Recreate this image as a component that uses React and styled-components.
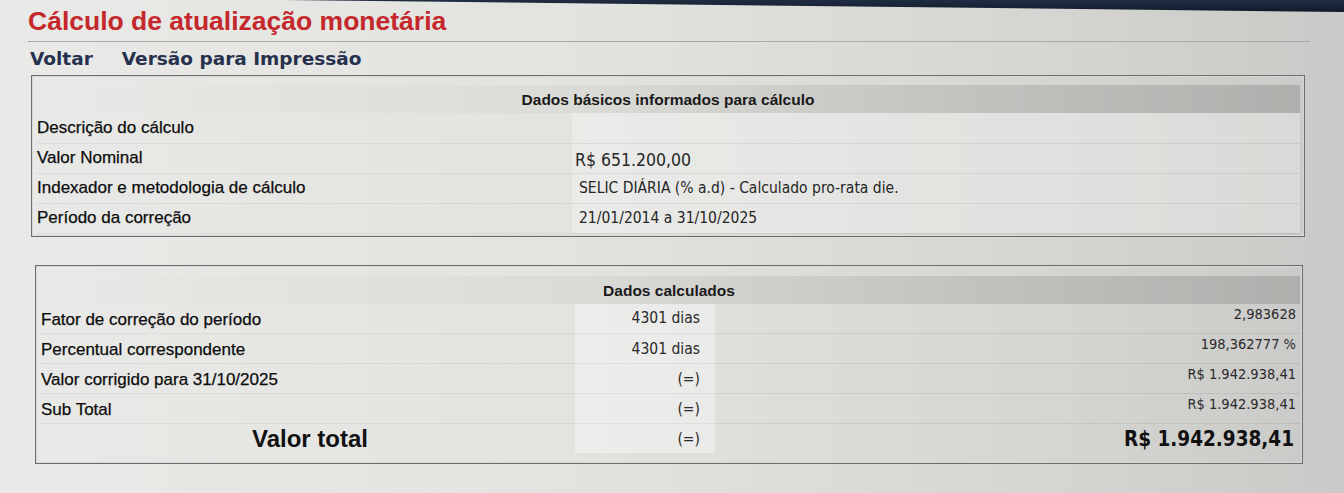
import React from 'react'
import styled, { createGlobalStyle } from 'styled-components'

const GlobalStyle = createGlobalStyle`
  html, body {
    margin: 0;
    padding: 0;
  }
  body {
    background: linear-gradient(90deg, #e9e9e7 0%, #e2e2df 45%, #d4d4d1 80%, #c9c9c7 100%);
    font-family: "Liberation Sans", Arial, sans-serif;
    color: #1c1c1c;
    height: 493px;
    overflow: hidden;
  }
`

const basicRows = [
  { label: 'Descrição do cálculo', value: '' },
  { label: 'Valor Nominal', value: 'R$ 651.200,00', big: true },
  { label: 'Indexador e metodologia de cálculo', value: 'SELIC DIÁRIA (% a.d) - Calculado pro-rata die.' },
  { label: 'Período da correção', value: '21/01/2014 a 31/10/2025' },
]

const calcRows = [
  { label: 'Fator de correção do período', mid: '4301 dias', value: '2,983628' },
  { label: 'Percentual correspondente', mid: '4301 dias', value: '198,362777 %' },
  { label: 'Valor corrigido para 31/10/2025', mid: '(=)', value: 'R$ 1.942.938,41' },
  { label: 'Sub Total', mid: '(=)', value: 'R$ 1.942.938,41' },
]

const App = () => {
  return (
    <>
      <GlobalStyle />
      <TopEdge />
      <Page>
        <Title>Cálculo de atualização monetária</Title>
        <Nav>
          <NavLink>Voltar</NavLink>
          <NavLink>Versão para Impressão</NavLink>
        </Nav>

        <BasicBox>
          <Table>
            <colgroup>
              <col style={{ width: 536 }} />
              <col />
            </colgroup>
            <thead>
              <HeadRow>
                <HeadCell colSpan={2}>Dados básicos informados para cálculo</HeadCell>
              </HeadRow>
            </thead>
            <tbody>
              {basicRows.map((r) => (
                <Row key={r.label}>
                  <LabelCell>{r.label}</LabelCell>
                  <ValueCell $big={r.big}>{r.value}</ValueCell>
                </Row>
              ))}
            </tbody>
          </Table>
        </BasicBox>

        <CalcBox>
          <Table>
            <colgroup>
              <col style={{ width: 537 }} />
              <col style={{ width: 140 }} />
              <col />
            </colgroup>
            <thead>
              <HeadRow>
                <HeadCell colSpan={3}>Dados calculados</HeadCell>
              </HeadRow>
            </thead>
            <tbody>
              {calcRows.map((r) => (
                <Row key={r.label}>
                  <CalcLabel>{r.label}</CalcLabel>
                  <MidCell>{r.mid}</MidCell>
                  <AmountCell>{r.value}</AmountCell>
                </Row>
              ))}
              <Row>
                <TotalLabel>Valor total</TotalLabel>
                <MidCell>(=)</MidCell>
                <TotalAmount>R$ 1.942.938,41</TotalAmount>
              </Row>
            </tbody>
          </Table>
        </CalcBox>
      </Page>
    </>
  )
}

const TopEdge = styled.div`
  position: absolute;
  top: 0;
  right: 0;
  width: 1060px;
  height: 12px;
  background: linear-gradient(180deg, #1f2c42 0%, #111a29 100%);
  clip-path: polygon(0 0, 100% 0, 100% 100%, 0 0);
`

const Page = styled.div`
  padding: 4px 34px 0 28px;
`

const Title = styled.h1`
  margin: 0;
  padding: 2px 0 5px 0;
  font-family: "Liberation Sans", Arial, sans-serif;
  font-size: 26.5px;
  line-height: 30px;
  font-weight: bold;
  color: #c4282b;
  border-bottom: 1px solid #a9a9a7;
`

const Nav = styled.div`
  display: flex;
  gap: 29px;
  padding: 6px 0 0 2px;
  height: 26px;
`

const NavLink = styled.a`
  font-family: "DejaVu Sans", Verdana, sans-serif;
  font-size: 18.5px;
  line-height: 22px;
  font-weight: bold;
  color: #26314d;
  cursor: pointer;
`

const Box = styled.div`
  border: 1px solid #6d6d6b;
  box-shadow: inset 0 0 0 1px #d8d8d6;
`

const BasicBox = styled(Box)`
  margin: 1px 5px 0 3px;
  padding: 9px 4px 2px 4px;
`

const CalcBox = styled(Box)`
  margin: 28px 7px 0 7px;
  padding: 10px 2px 9px 2px;
`

const Table = styled.table`
  width: 100%;
  border-collapse: collapse;
  table-layout: fixed;
`

const HeadRow = styled.tr`
  height: 28px;
`

const Row = styled.tr`
  height: 30px;
`

const HeadCell = styled.th`
  padding: 2px 0 0 0;
  font-family: "Liberation Sans", Arial, sans-serif;
  font-size: 15.5px;
  font-weight: bold;
  color: #1a1a1a;
  text-align: center;
  background: linear-gradient(90deg, rgba(0,0,0,0) 0%, rgba(0,0,0,0.03) 40%, rgba(0,0,0,0.1) 75%, rgba(0,0,0,0.14) 100%);
`

const LabelCell = styled.td`
  padding: 0 0 0 1px;
  font-family: "Liberation Sans", Arial, sans-serif;
  font-size: 17px;
  color: #0d0d0d;
  -webkit-text-stroke: 0.25px #0d0d0d;
  border-bottom: 1px solid rgba(0,0,0,0.05);
  white-space: nowrap;
`

const ValueCell = styled.td`
  padding: ${(p) => (p.$big ? '4px 0 0 3px' : '0 0 0 7px')};
  font-family: "DejaVu Sans Condensed", "DejaVu Sans", Tahoma, sans-serif;
  font-size: ${(p) => (p.$big ? '17.5px' : '15.5px')};
  color: #262626;
  background: rgba(255,255,255,0.28);
  border-bottom: 1px solid rgba(0,0,0,0.07);
  white-space: nowrap;
`

const CalcLabel = styled(LabelCell)`
  vertical-align: bottom;
  padding: 0 0 3px 3px;
`

const MidCell = styled.td`
  padding: 0 15px 0 0;
  font-family: "DejaVu Sans Condensed", "DejaVu Sans", Tahoma, sans-serif;
  font-size: 15.5px;
  color: #2a2a2a;
  text-align: right;
  background: rgba(255,255,255,0.35);
  border-bottom: 1px solid rgba(0,0,0,0.05);
`

const AmountCell = styled.td`
  vertical-align: top;
  padding: 2px 4px 0 0;
  font-family: "DejaVu Sans Condensed", "DejaVu Sans", Tahoma, sans-serif;
  font-size: 14.5px;
  color: #2a2a2a;
  text-align: right;
  border-bottom: 1px solid rgba(0,0,0,0.07);
  white-space: nowrap;
`

const TotalLabel = styled.td`
  padding: 0 0 0 214px;
  font-family: "Liberation Sans", Arial, sans-serif;
  font-size: 24px;
  font-weight: bold;
  color: #111;
`

const TotalAmount = styled(AmountCell)`
  padding: 0 6px 0 0;
  vertical-align: middle;
  font-size: 20.5px;
  font-weight: bold;
  color: #111;
  border-bottom: none;
`

export default App
